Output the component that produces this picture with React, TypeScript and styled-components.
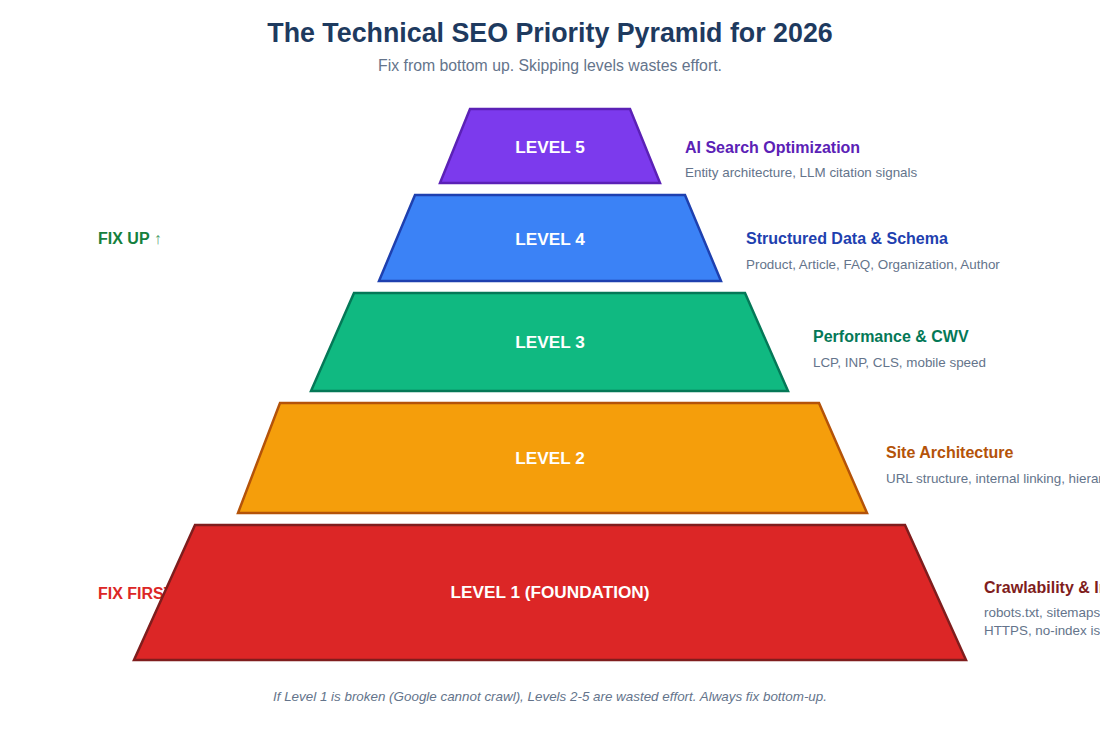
import React from "react";
import styled, { createGlobalStyle } from "styled-components";

const GlobalStyle = createGlobalStyle`
  html, body {
    margin: 0;
    padding: 0;
    background: #ffffff;
    overflow: hidden;
  }
  body {
    font-family: "Liberation Sans", Arial, sans-serif;
  }
`;

const Page = styled.div`
  width: 1100px;
  height: 733px;
  display: flex;
  flex-direction: column;
  align-items: center;
  background: #ffffff;
  overflow: hidden;
`;

const Header = styled.header`
  display: flex;
  flex-direction: column;
  align-items: center;
  gap: 6px;
  padding-top: 17px;
`;

const Title = styled.h1`
  margin: 0;
  font-size: 26.8px;
  line-height: 32px;
  font-weight: 700;
  color: #1e3a5f;
`;

const Subtitle = styled.p`
  margin: 0;
  padding-top: 1px;
  font-size: 15.8px;
  line-height: 20px;
  color: #64748b;
`;

const Diagram = styled.svg`
  display: block;
  margin-top: 19px;
  width: 1100px;
  height: 580px;
  overflow: hidden;
  font-family: "Liberation Sans", Arial, sans-serif;
`;

const Tier = styled.polygon<{ $fill: string; $stroke: string }>`
  fill: ${(p) => p.$fill};
  stroke: ${(p) => p.$stroke};
  stroke-width: 2.5;
  stroke-linejoin: miter;
`;

const TierLabel = styled.text`
  fill: #ffffff;
  font-size: 17.2px;
  font-weight: 700;
  text-anchor: middle;
`;

const Heading = styled.text<{ $color: string }>`
  fill: ${(p) => p.$color};
  font-size: 16px;
  font-weight: 700;
`;

const Desc = styled.text`
  fill: #64748b;
  font-size: 13.4px;
`;

const SideNote = styled.text<{ $color: string }>`
  fill: ${(p) => p.$color};
  font-size: 16px;
  font-weight: 700;
`;

const Arrow = styled.tspan`
  font-weight: 400;
  fill-opacity: 0.75;
`;

const Footer = styled.p`
  margin: 13px 0 0;
  font-size: 13.4px;
  line-height: 18px;
  font-style: italic;
  color: #64748b;
`;

type Level = {
  label: string;
  points: string;
  labelY: number;
  fill: string;
  stroke: string;
  textX: number;
  heading: string;
  headingY: number;
  desc: string[];
  descY: number;
};

const levels: Level[] = [
  {
    label: "LEVEL 5",
    points: "470,109 630,109 660,183 440,183",
    labelY: 153,
    fill: "#7c3aed",
    stroke: "#5b21b6",
    textX: 685,
    heading: "AI Search Optimization",
    headingY: 153.3,
    desc: ["Entity architecture, LLM citation signals"],
    descY: 177.3,
  },
  {
    label: "LEVEL 4",
    points: "415,195 685,195 721,281 379,281",
    labelY: 244.6,
    fill: "#3b82f6",
    stroke: "#1e40af",
    textX: 746,
    heading: "Structured Data & Schema",
    headingY: 244.4,
    desc: ["Product, Article, FAQ, Organization, Author"],
    descY: 269.3,
  },
  {
    label: "LEVEL 3",
    points: "354,293 745,293 788,391 311,391",
    labelY: 348,
    fill: "#10b981",
    stroke: "#047857",
    textX: 813,
    heading: "Performance & CWV",
    headingY: 342.3,
    desc: ["LCP, INP, CLS, mobile speed"],
    descY: 366.7,
  },
  {
    label: "LEVEL 2",
    points: "280,403 819,403 867,513 238,513",
    labelY: 464,
    fill: "#f59e0b",
    stroke: "#b45309",
    textX: 886,
    heading: "Site Architecture",
    headingY: 458.3,
    desc: ["URL structure, internal linking, hierarchy"],
    descY: 483.3,
  },
  {
    label: "LEVEL 1 (FOUNDATION)",
    points: "195,525 905,525 966,660 134,660",
    labelY: 598,
    fill: "#dc2626",
    stroke: "#7f1d1d",
    textX: 984,
    heading: "Crawlability & Indexation",
    headingY: 592.7,
    desc: ["robots.txt, sitemaps, canonicals,", "HTTPS, no-index issues"],
    descY: 617.3,
  },
];

export default function App() {
  return (
    <>
      <GlobalStyle />
      <Page>
        <Header>
          <Title>The Technical SEO Priority Pyramid for 2026</Title>
          <Subtitle>Fix from bottom up. Skipping levels wastes effort.</Subtitle>
        </Header>
        <Diagram viewBox="0 95 1100 580" xmlns="http://www.w3.org/2000/svg">
          <SideNote $color="#15803d" x={98} y={244.3}>
            FIX UP <Arrow>↑</Arrow>
          </SideNote>
          <SideNote $color="#dc2626" x={98} y={599}>
            FIX FIRST
          </SideNote>
          {levels.map((lv) => (
            <g key={lv.label}>
              <Tier points={lv.points} $fill={lv.fill} $stroke={lv.stroke} />
              <TierLabel x={550} y={lv.labelY}>
                {lv.label}
              </TierLabel>
              <Heading $color={lv.stroke} x={lv.textX} y={lv.headingY}>
                {lv.heading}
              </Heading>
              {lv.desc.map((line, i) => (
                <Desc key={line} x={lv.textX} y={lv.descY + i * 17.7}>
                  {line}
                </Desc>
              ))}
            </g>
          ))}
        </Diagram>
        <Footer>
          If Level 1 is broken (Google cannot crawl), Levels 2-5 are wasted effort. Always fix bottom-up.
        </Footer>
      </Page>
    </>
  );
}
